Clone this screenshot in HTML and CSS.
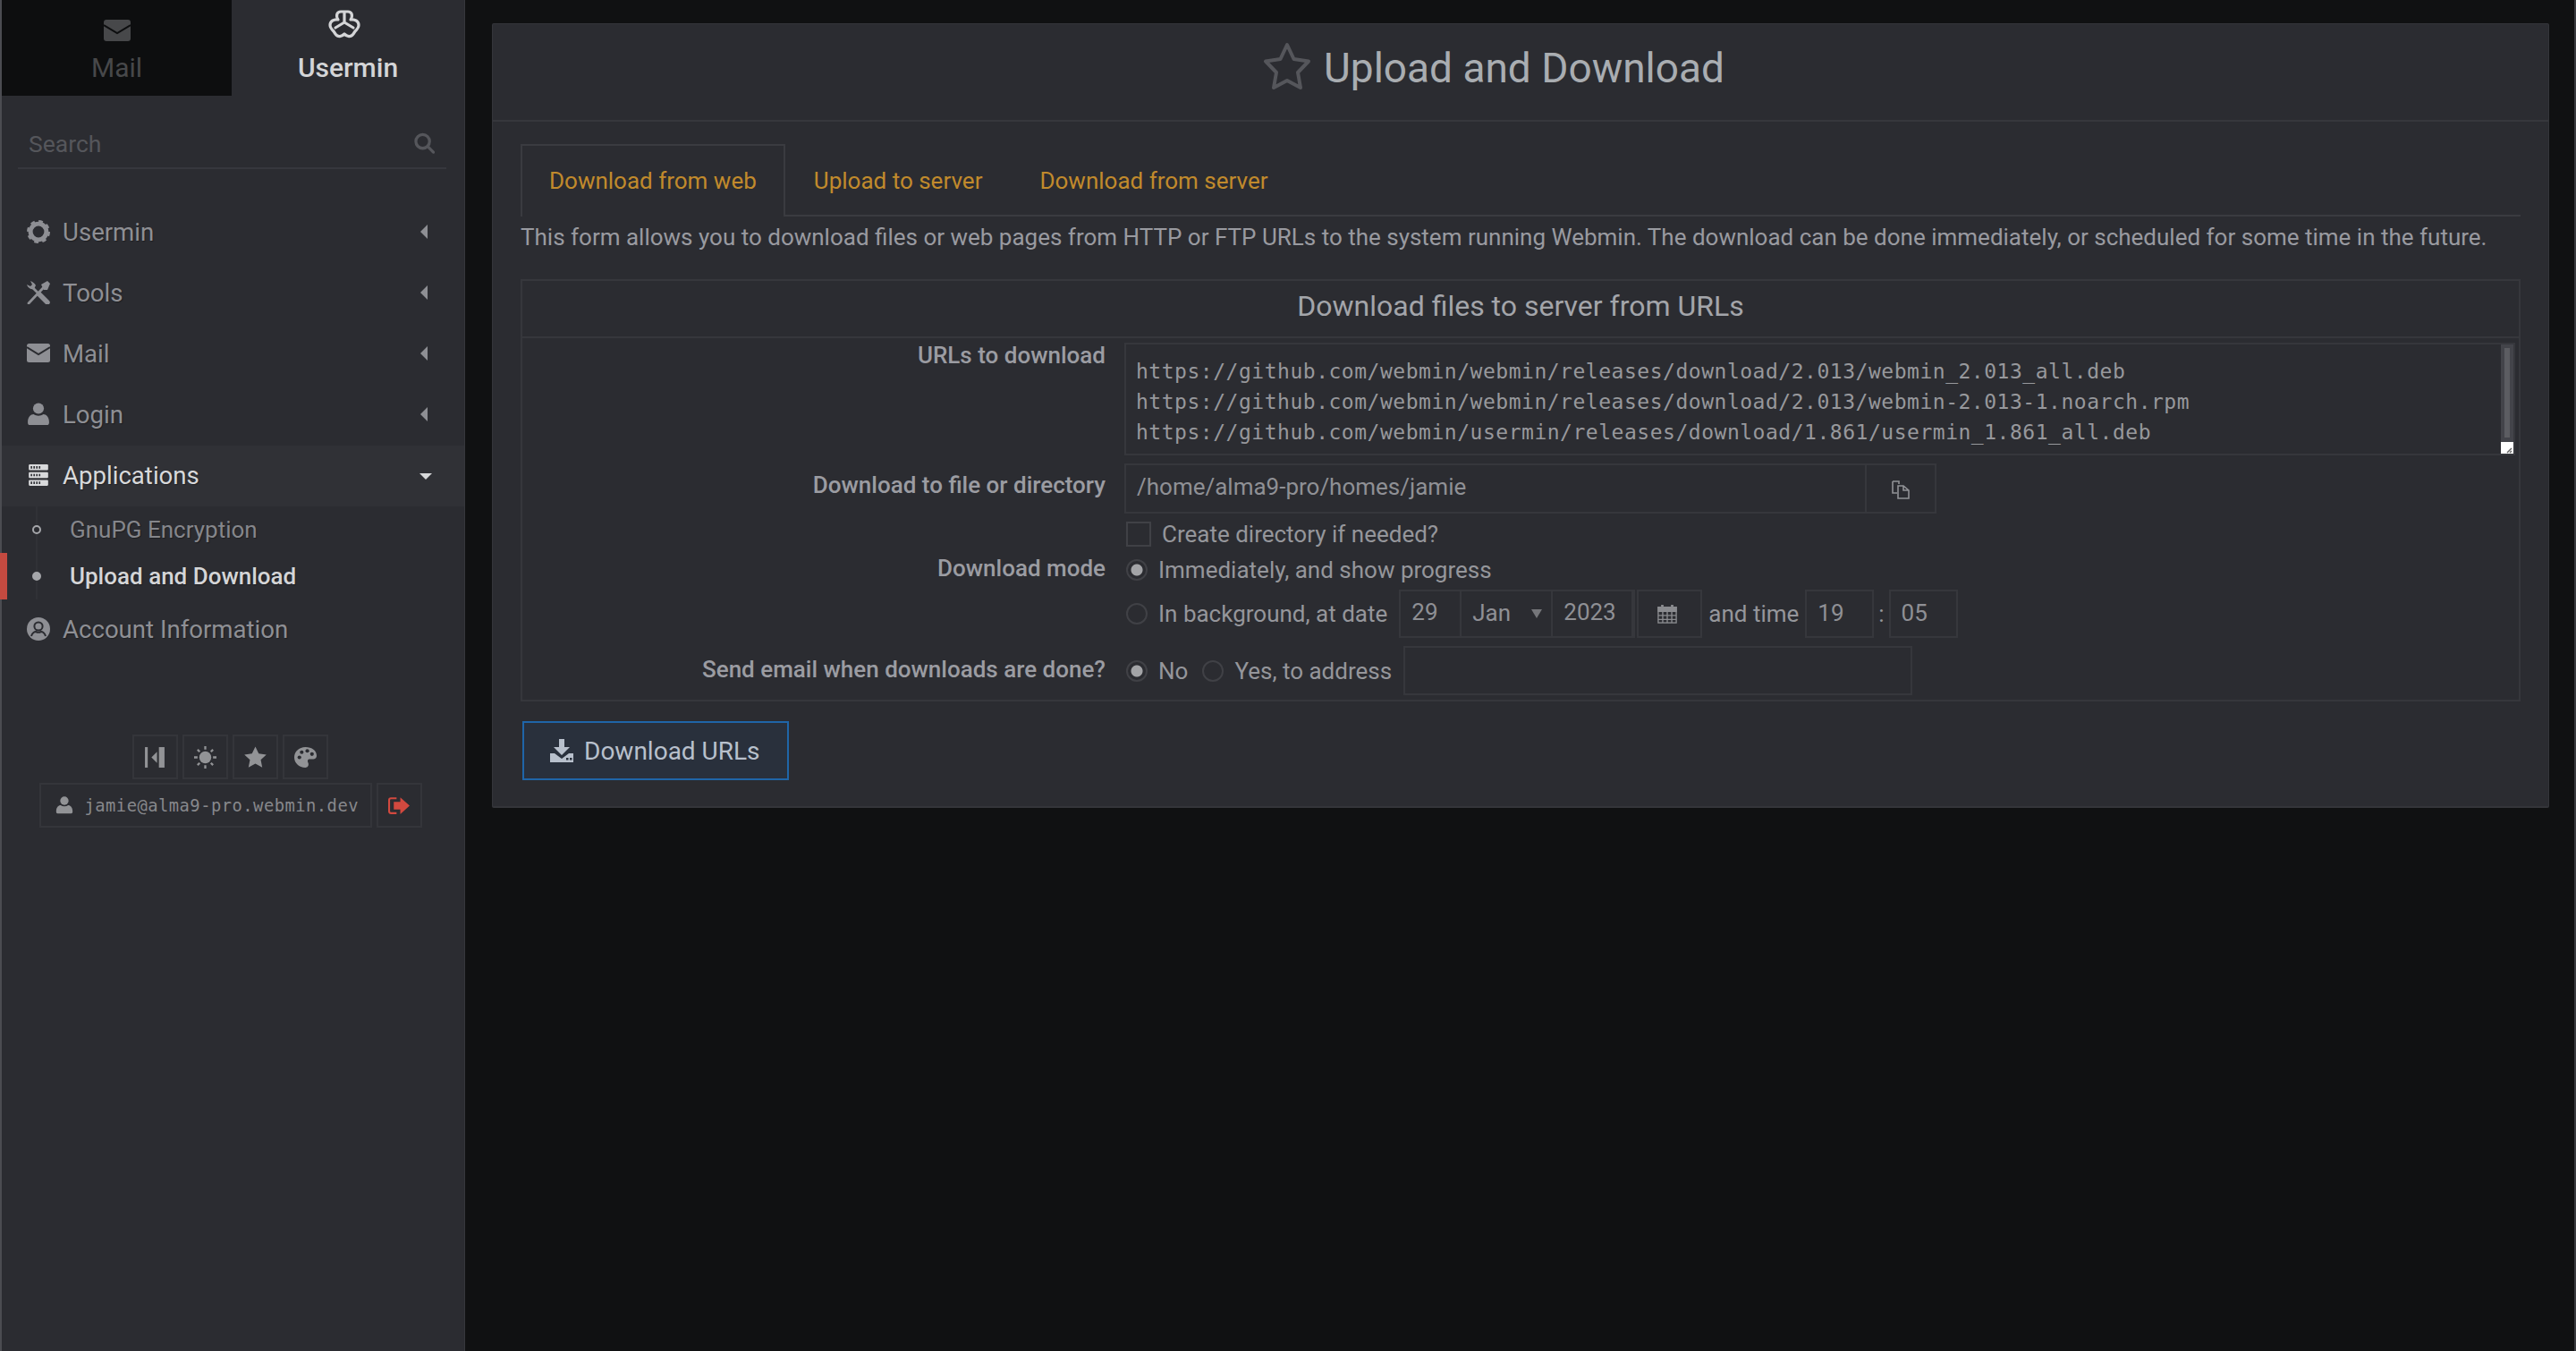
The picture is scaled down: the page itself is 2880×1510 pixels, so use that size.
FILE: index.html
```html
<!DOCTYPE html>
<html lang="en">
<head>
<meta charset="utf-8">
<title>Upload and Download</title>
<link rel="stylesheet" href="styles.css">
</head>
<body>
<aside class="sidebar">
  <div class="switch">
    <div class="switch-tab mail-tab">
      <svg class="sw-icon env" viewBox="0 0 30 24"><rect width="30" height="24" rx="3" fill="currentColor"/><path d="M0 6 L15 15 L30 6" fill="none" stroke="#0d0e0f" stroke-width="2"/></svg>
      <span>Mail</span>
    </div>
    <div class="switch-tab user-tab">
      <svg class="sw-icon logo" viewBox="0 0 36 32" fill="none" stroke="currentColor" stroke-width="3.2" stroke-linejoin="round" stroke-linecap="round"><path d="M11 11 C8 6 10 2 14 2 H22 C26 2 28 6 25 11 C30 10 34 13 34 17 C34 20 32 22 30 24 L28 27 C25 31 21 30 18 27 C15 30 11 31 8 27 L6 24 C4 22 2 20 2 17 C2 13 6 10 11 11 Z"/><path d="M18 3 V14 M8 20 L18 14 L28 20"/></svg>
      <span>Usermin</span>
    </div>
  </div>
  <div class="search"><span>Search</span>
    <svg class="search-icon" viewBox="0 0 24 24" fill="none" stroke="currentColor" stroke-width="3.4" stroke-linecap="round"><circle cx="10" cy="10" r="8"/><path d="M16 16 L22.5 22.5"/></svg>
  </div>
  <nav class="menu">
    <div class="item">
      <svg class="ico" viewBox="0 0 24 24"><circle cx="12" cy="12" r="8.2" fill="none" stroke="currentColor" stroke-width="4.6"/><circle cx="12" cy="12" r="10.6" fill="none" stroke="currentColor" stroke-width="2.8" stroke-dasharray="4.3 4"/></svg>
      <span class="item-text">Usermin</span><i class="caret-left"></i>
    </div>
    <div class="item">
      <svg class="ico" viewBox="0 0 26 26" fill="none" stroke="currentColor" stroke-linecap="round"><path d="M2 25 L19 7" stroke-width="2.8"/><path d="M16 4 L23 0 L26 3 L23 10 L19 10 Z" fill="currentColor" stroke="none"/><path d="M6 7 L14 15" stroke-width="2.8"/><path d="M14 15 L23 24" stroke-width="5.500"/><path d="M0 4 C1 8 5 10 8 9 L10 5 C9 3 7 1 4 0 L6 4 L4 6 Z" fill="currentColor" stroke="none"/></svg>
      <span class="item-text">Tools</span><i class="caret-left"></i>
    </div>
    <div class="item">
      <svg class="ico" viewBox="0 0 26 22"><rect width="26" height="21" rx="2.5" fill="currentColor"/><path d="M0 4 L13 12 L26 4" fill="none" stroke="#2b2c31" stroke-width="2"/></svg>
      <span class="item-text">Mail</span><i class="caret-left"></i>
    </div>
    <div class="item">
      <svg class="ico" viewBox="0 0 24 24"><circle cx="12" cy="6" r="5.6" fill="currentColor"/><path d="M3 23 C1 23 1 21 1 20 C1 15 4 12 7 12 C10 14 14 14 17 12 C20 12 23 15 23 20 C23 21 23 23 21 23 Z" fill="currentColor"/></svg>
      <span class="item-text">Login</span><i class="caret-left"></i>
    </div>
    <div class="item open">
      <svg class="ico" viewBox="0 0 24 24"><g fill="currentColor"><rect x="2" y="1" width="20" height="6" rx="1"/><rect x="2" y="9" width="20" height="6" rx="1"/><rect x="2" y="17" width="20" height="6" rx="1"/></g><path d="M4 4 H15 M4 12 H15 M4 20 H15" stroke="#303136" stroke-width="2.4" stroke-dasharray="1.5 1.3"/></svg>
      <span class="item-text">Applications</span><i class="caret-down"></i>
    </div>
    <div class="submenu">
      <div class="sub"><i class="dot"></i><span>GnuPG Encryption</span></div>
      <div class="sub current"><i class="dot"></i><span>Upload and Download</span></div>
    </div>
    <div class="item">
      <svg class="ico" viewBox="0 0 26 26"><circle cx="13" cy="13" r="13" fill="currentColor"/><circle cx="13" cy="10" r="4.6" fill="none" stroke="#2b2c31" stroke-width="2"/><path d="M5 21 C6 17 9 16 10 16 C12 17 14 17 16 16 C17 16 20 17 21 21" fill="none" stroke="#2b2c31" stroke-width="2"/></svg>
      <span class="item-text">Account Information</span>
    </div>
  </nav>
  <div class="tools">
    <div class="tool-row">
      <div class="tool"><svg viewBox="0 0 24 24" fill="currentColor"><rect x="1" y="1" width="3" height="22"/><rect x="16" y="1" width="6" height="22"/><path d="M14 6 V18 L8 12 Z"/></svg></div>
      <div class="tool"><svg viewBox="0 0 26 26"><circle cx="13" cy="13" r="7" fill="currentColor"/><path d="M13 0 V4 M13 22 V26 M0 13 H4 M22 13 H26 M4 4 L6.5 6.5 M19.5 19.5 L22 22 M22 4 L19.5 6.5 M4 22 L6.5 19.5" stroke="currentColor" stroke-width="2.4"/></svg></div>
      <div class="tool"><svg viewBox="0 0 24 24" fill="currentColor"><path d="M12 0.5 L15.6 8 L23.8 9 L17.8 14.6 L19.4 22.8 L12 18.8 L4.6 22.8 L6.2 14.6 L0.2 9 L8.4 8 Z"/></svg></div>
      <div class="tool"><svg viewBox="0 0 24 24"><path d="M12 1 C19 1 24 5 24 10 C24 14 20 14 17 14 C14 14 14 16 15 18 C16 21 14 23 12 23 C5 23 0 18 0 12 C0 6 5 1 12 1 Z" fill="currentColor"/><g fill="#2b2c31"><circle cx="5.5" cy="12" r="2"/><circle cx="8" cy="6.5" r="2"/><circle cx="14" cy="5" r="2"/><circle cx="19" cy="8.5" r="2"/></g></svg></div>
    </div>
    <div class="tool-row">
      <div class="tool wide">
        <svg viewBox="0 0 24 24"><circle cx="12" cy="6" r="5.6" fill="currentColor"/><path d="M3 23 C1 23 1 21 1 20 C1 15 4 12 7 12 C10 14 14 14 17 12 C20 12 23 15 23 20 C23 21 23 23 21 23 Z" fill="currentColor"/></svg>
        <span>jamie@alma9-pro.webmin.dev</span>
      </div>
      <div class="tool logout"><svg viewBox="0 0 24 20"><path d="M9 2 H3 Q1 2 1 4 V16 Q1 18 3 18 H9" fill="none" stroke="currentColor" stroke-width="2"/><path d="M6 6 H13 V1 L23 10 L13 19 V14 H6 Z" fill="currentColor"/></svg></div>
    </div>
  </div>
</aside>
<main class="main">
  <section class="panel">
    <header class="panel-head">
      <svg class="star" viewBox="0 0 54 54" fill="none" stroke="currentColor" stroke-width="4" stroke-linejoin="round"><path d="M27 3 L34.500 19 L51 21.500 L39 34 L42 51 L27 43 L12 51 L15 34 L3 21.500 L19.500 19 Z"/></svg>
      <h1>Upload and Download</h1>
    </header>
    <div class="panel-body">
      <div class="tabs">
        <div class="tab active">Download from web</div>
        <div class="tab">Upload to server</div>
        <div class="tab">Download from server</div>
      </div>
      <p class="desc">This form allows you to download files or web pages from HTTP or FTP URLs to the system running Webmin. The download can be done immediately, or scheduled for some time in the future.</p>
      <div class="box">
        <h2 class="box-head">Download files to server from URLs</h2>
        <div class="row urls-row">
          <div class="label">URLs to download</div>
          <div class="value">
            <div class="textarea">
              <div>https://github.com/webmin/webmin/releases/download/2.013/webmin_2.013_all.deb</div>
              <div>https://github.com/webmin/webmin/releases/download/2.013/webmin-2.013-1.noarch.rpm</div>
              <div>https://github.com/webmin/usermin/releases/download/1.861/usermin_1.861_all.deb</div>
              <i class="scroll-track"><i class="scroll-thumb"></i></i>
              <i class="resizer"><svg viewBox="0 0 14 13"><path d="M12 7 L7 12 M12 10 L10 12" stroke="#666" stroke-width="1.500"/></svg></i>
            </div>
          </div>
        </div>
        <div class="row dir-row">
          <div class="label">Download to file or directory</div>
          <div class="value">
            <div class="input-group">
              <div class="field path">/home/alma9-pro/homes/jamie</div>
              <div class="addon"><svg class="copy" viewBox="0 0 22 22" fill="none" stroke="currentColor" stroke-width="1.600"><path d="M2 2 H9 V5 M2 2 V15 H7 M8 7 H14 L20 12 V21 H8 Z M14 7 V12 H20"/></svg></div>
            </div>
            <div class="check-line"><i class="check"></i><span>Create directory if needed?</span></div>
          </div>
        </div>
        <div class="row mode-row">
          <div class="label">Download mode</div>
          <div class="value">
            <div class="radio-line"><i class="radio on"></i><span>Immediately, and show progress</span></div>
            <div class="radio-line date-line">
              <i class="radio"></i><span>In background, at date</span>
              <div class="date-group">
                <div class="cell day">29</div>
                <div class="cell month">Jan<i class="select-arrow"></i></div>
                <div class="cell year">2023</div>
              </div>
              <div class="cal"><svg viewBox="0 0 24 24" fill="none" stroke="currentColor" stroke-width="1.500"><rect x="1" y="4" width="22" height="19"/><path d="M1 4 H23 V9 H1 Z" fill="currentColor"/><path d="M1 14 H23 M1 19 H23 M6.500 9 V23 M12 9 V23 M17.500 9 V23"/><path d="M6 1 V5 M18 1 V5" stroke-width="3"/></svg></div>
              <span class="and-time">and time</span>
              <div class="cell hour">19</div>
              <span class="colon">:</span>
              <div class="cell minute">05</div>
            </div>
          </div>
        </div>
        <div class="row mail-row">
          <div class="label">Send email when downloads are done?</div>
          <div class="value mail-value">
            <i class="radio on"></i><span>No</span>
            <i class="radio second"></i><span>Yes, to address</span>
            <div class="cell address"></div>
          </div>
        </div>
      </div>
      <div class="btn">
        <svg viewBox="0 0 26 26" fill="currentColor"><path d="M10 0 H16 V9 H22 L13 18 L4 9 H10 Z"/><path d="M0 16 H5 L13 22 L21 16 H26 V26 H0 Z"/><g fill="#29303c"><rect x="18" y="21" width="2.500" height="2.500"/><rect x="22" y="21" width="2.500" height="2.500"/></g></svg>
        <span>Download URLs</span>
      </div>
    </div>
  </section>
</main>
</body>
</html>
```

FILE: styles.css
```css
* { box-sizing: border-box; }
html, body { margin: 0; height: 100%; }
body {
  display: flex;
  height: 1510px;
  overflow: hidden;
  background: #101112;
  border-right: 2px solid #3a3b3f;
  font-family: Roboto, "Noto Sans", sans-serif;
  font-size: 26px;
  color: #9a9ba1;
}
i { display: block; }

/* sidebar */
.sidebar {
  flex: 0 0 520px;
  background: #2b2c31;
  border-left: 2px solid #4b4c51;
  border-right: 1px solid #36373c;
}
.switch { display: flex; height: 107px; }
.switch-tab {
  display: flex;
  flex-direction: column;
  align-items: center;
  font-size: 30px;
  line-height: 36px;
}
.mail-tab { flex: 0 0 257px; background: #0d0e0f; color: #47484a; padding-top: 22px; }
.user-tab { flex: 1; color: #d4d5d7; font-weight: 500; padding-top: 11px; }
.env { width: 30px; height: 24px; margin-bottom: 12px; }
.logo { width: 36px; height: 32px; margin: 0 8px 15px 0; }
.search {
  display: flex;
  align-items: center;
  justify-content: space-between;
  height: 82px;
  margin: 0 20px 0 18px;
  padding: 26px 13px 0 12px;
  border-bottom: 2px solid #36373d;
  font-size: 26.500px;
  color: #55565b;
}
.search-icon { width: 23px; height: 24px; }
.menu { margin-top: 37px; }
.item {
  display: flex;
  align-items: center;
  height: 68px;
  padding: 0 41px 2px 28px;
  font-size: 27.600px;
  color: #8e8f94;
  text-shadow: 1px 1px 1px rgba(0, 0, 0, 0.3);
}
.ico { width: 26px; height: 26px; flex: none; }
.item-text { margin-left: 14px; flex: 1; }
.caret-left { width: 0; height: 0; border: 8px solid transparent; border-left-width: 0; border-right: 8px solid currentColor; }
.open { background: #303136; color: #d8d9db; padding-right: 36px; }
.caret-down { width: 0; height: 0; border: 7px solid transparent; border-top: 7px solid currentColor; border-bottom-width: 0; margin-top: 2px; }
.submenu { position: relative; }
.submenu::before { content: ""; position: absolute; left: 38px; top: 0; bottom: 0; width: 2px; background: #303136; }
.sub {
  position: relative;
  display: flex;
  align-items: center;
  height: 52px;
  padding-left: 34px;
  font-size: 26px;
  color: #85868b;
  text-shadow: 1px 1px 1px rgba(0, 0, 0, 0.3);
}
.dot { position: relative; width: 10px; height: 10px; border: 2px solid #a5a6aa; border-radius: 50%; background: #2b2c31; margin-right: 32px; }
.current { color: #d4d5d7; font-weight: 500; }
.current::before { content: ""; position: absolute; left: -2px; top: 0; bottom: 0; width: 8px; background: #c44a40; }
.current .dot { background: #a5a6aa; }
.tools { margin-top: 83px; padding-right: 6px; display: flex; flex-direction: column; align-items: center; gap: 4px; }
.tool-row { display: flex; gap: 5px; }
.tool {
  width: 51px;
  height: 50px;
  display: flex;
  align-items: center;
  justify-content: center;
  border: 2px solid #34353a;
  color: #929396;
}
.tool svg { width: 25px; height: 25px; }
.wide { width: 372px; justify-content: flex-start; padding-left: 16px; gap: 13px; font-family: "DejaVu Sans Mono", monospace; font-size: 18.800px; letter-spacing: 0.480px; color: #87888c; }
.wide svg { width: 20px; height: 22px; color: #929396; }
.logout { color: #d2493f; }

/* content */
.main { flex: 1; padding: 26px 28px 0 30px; min-width: 0; }
.panel {
  height: 877px;
  background: #2b2c31;
  border: 1px solid #34353a;
  border-bottom: 2px solid #34353a;
  border-radius: 2px;
}
.panel-head {
  display: flex;
  align-items: center;
  justify-content: center;
  gap: 14px;
  height: 109px;
  padding: 0 60px 10px 0;
  border-bottom: 2px solid #36373c;
}
.star { width: 54px; height: 54px; margin-top: -3px; color: #55565b; }
h1 { margin: 0; font-size: 46px; font-weight: 400; color: #a9adb1; }
.panel-body { padding: 25px 31px 0; }
.tabs { display: flex; height: 81px; border-bottom: 2px solid #3a3b40; }
.tab {
  display: flex;
  align-items: center;
  height: 81px;
  padding: 0 30px 1px;
  border: 2px solid transparent;
  border-bottom: 0;
  color: #c18a2c;
  font-size: 26px;
}
.active { border-color: #3a3b40; background: #2b2c31; }
.desc { margin: 0; height: 70px; padding-top: 7px; line-height: 32px; font-size: 26px; color: #999aa0; }
.box { border: 2px solid #36373c; height: 472px; }
.box-head { margin: 0; height: 64px; border-bottom: 2px solid #36373c; text-align: center; font-size: 32px; line-height: 56px; font-weight: 400; color: #a3a5aa; }
.row { display: grid; grid-template-columns: 652px 1fr; column-gap: 21px; }
.label { text-align: right; font-weight: 500; font-size: 26px; line-height: 32px; color: #9b9ca2; }
.value { min-width: 0; padding-right: 4px; }
.urls-row { padding-top: 5px; height: 140px; }
.urls-row .label { margin-top: -2px; }
.textarea {
  position: relative;
  height: 126px;
  border: 2px solid #36373c;
  padding: 13px 11px;
  font-family: "DejaVu Sans Mono", monospace;
  font-size: 23px;
  letter-spacing: 0.520px;
  line-height: 34px;
  color: #97989c;
  white-space: nowrap;
}
.scroll-track { position: absolute; right: 0; top: 0; width: 14px; height: 110px; background: #43444a; }
.scroll-thumb { width: 6px; height: 100px; margin: 4px; background: #5c5d62; }
.resizer { position: absolute; right: 0; bottom: 0; width: 14px; height: 13px; background: #fff; }
.resizer svg { display: block; }
.dir-row { height: 101px; }
.dir-row .label { padding-top: 8px; }
.input-group { display: flex; height: 56px; width: 908px; border: 2px solid #36373c; }
.field { flex: 1; padding: 0 12px; line-height: 48px; color: #8f9095; font-size: 26px; }
.addon { width: 78px; border-left: 2px solid #36373c; display: flex; align-items: center; justify-content: center; color: #919296; }
.copy { width: 22px; height: 22px; margin-top: 2px; }
.check-line { display: flex; align-items: center; height: 28px; margin-top: 9px; padding-left: 2px; color: #95969b; }
.check { width: 28px; height: 28px; border: 2px solid #404146; margin-right: 12px; }
.mode-row { height: 103px; padding-top: 1px; }
.mode-row .label { margin-top: -1px; }
.radio-line { display: flex; align-items: center; height: 34px; color: #95969b; }
.radio { flex: none; width: 24px; height: 24px; margin: 0 12px 0 2px; border: 2px solid #404146; border-radius: 50%; }
.on { background: radial-gradient(circle, #a3a4a7 0 6px, transparent 7px); }
.date-line { height: 54px; margin-top: 5px; }
.date-group { display: flex; margin-left: 13px; height: 54px; border: 2px solid #36373c; }
.cell { height: 54px; border: 2px solid #36373c; padding: 0 12px; line-height: 48px; color: #8f9095; }
.date-group .cell { height: 50px; border-width: 0 2px 0 0; line-height: 47px; }
.day { width: 68px; }
.month { position: relative; width: 102px; padding-top: 1px; }
.select-arrow { position: absolute; right: 10px; top: 20px; width: 0; height: 0; border: 6px solid transparent; border-top: 10px solid #75767a; border-bottom: 0; }
.year { width: 90px; }
.cal { width: 73px; height: 54px; margin-left: 2px; padding-right: 5px; border: 2px solid #36373c; display: flex; align-items: center; justify-content: center; color: #8a8b8f; }
.cal svg { width: 22px; height: 26px; }
.and-time { margin: 0 7px; }
.hour { width: 77px; }
.colon { margin: 0 5px; }
.minute { width: 77px; }
.mail-row { height: 58px; }
.mail-row .label { padding-top: 10px; }
.mail-value { display: flex; align-items: center; height: 55px; color: #95969b; }
.second { margin-left: 16px; }
.address { width: 569px; height: 55px; margin-left: 13px; }
.btn {
  display: inline-flex;
  align-items: center;
  gap: 12px;
  width: 298px;
  height: 66px;
  margin-top: 22px;
  padding-left: 29px;
  margin-left: 2px;
  background: #29303c;
  border: 2px solid #1f65a8;
  font-size: 28px;
  color: #b8c0cc;
}
.btn svg { width: 26px; height: 26px; }
```
